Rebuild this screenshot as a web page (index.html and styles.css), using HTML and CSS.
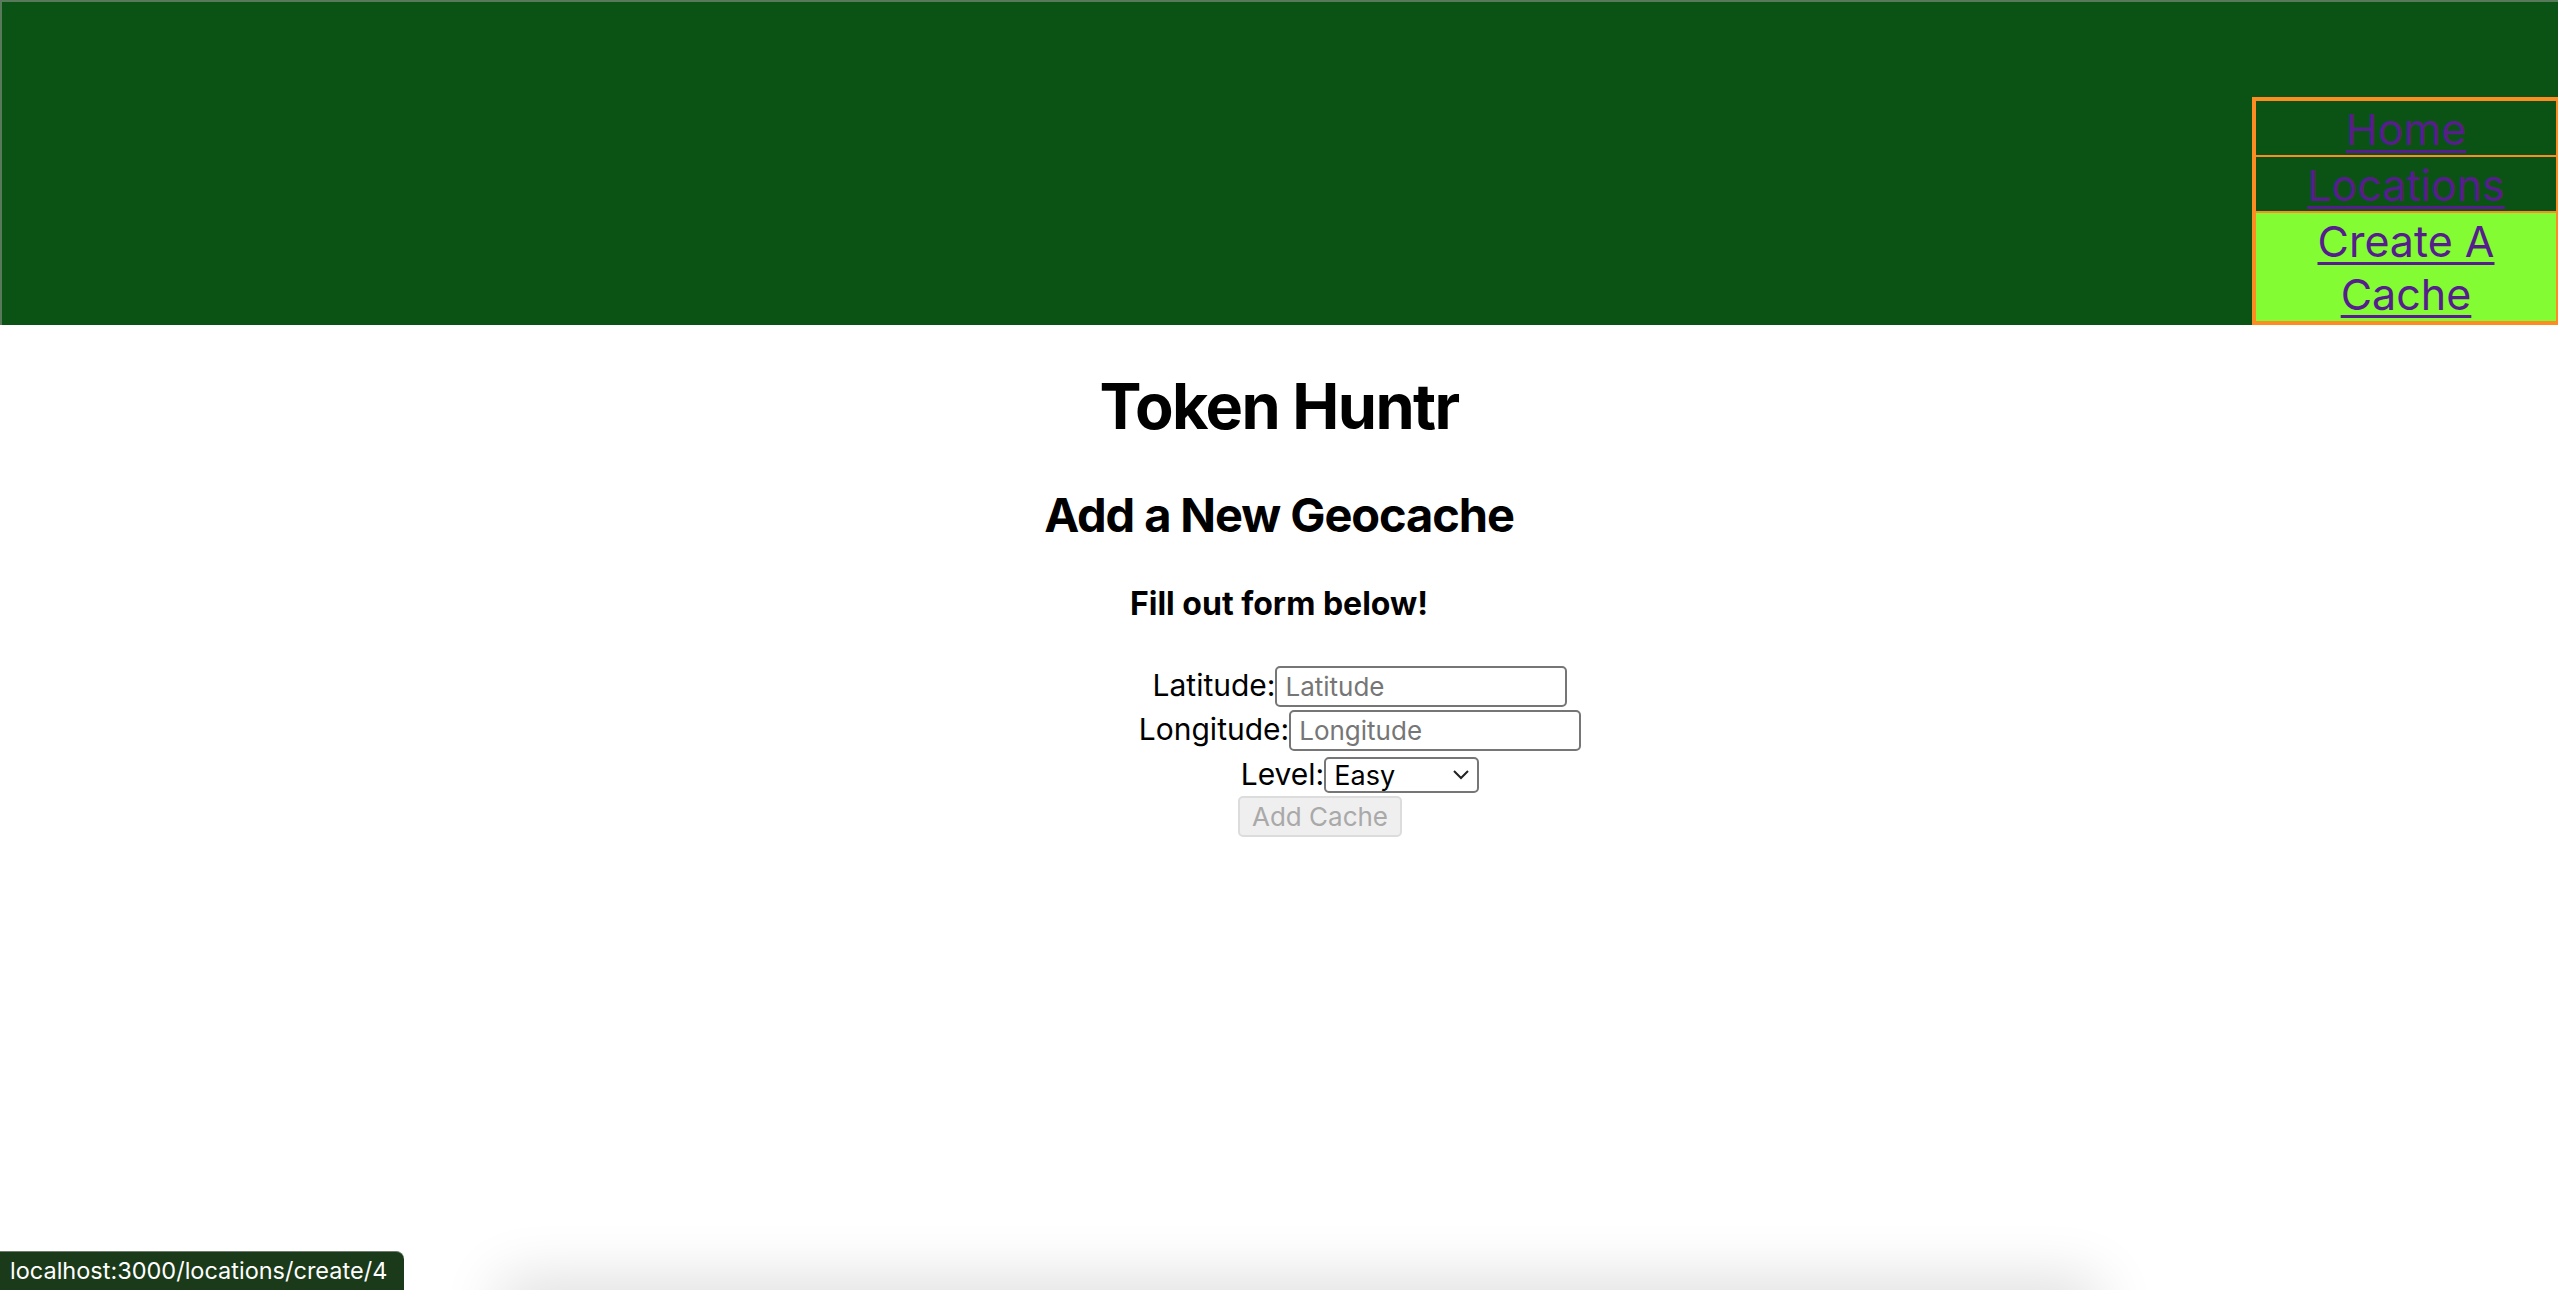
FILE: index.html
```html
<!DOCTYPE html>
<html lang="en">
<head>
  <meta charset="UTF-8">
  <title>Token Huntr</title>
  <link rel="stylesheet" href="styles.css">
</head>
<body>
  <header class="top-bar">
    <nav class="nav-menu">
      <a href="/" class="nav-link">Home</a>
      <a href="/locations" class="nav-link">Locations</a>
      <a href="/locations/create/4" class="nav-link active">Create A Cache</a>
    </nav>
  </header>

  <main class="content">
    <h1>Token Huntr</h1>
    <h2>Add a New Geocache</h2>
    <h4>Fill out form below!</h4>

    <form class="cache-form">
      <div class="form-row">
        <label for="lat">Latitude:</label>
        <input type="text" id="lat" name="latitude" placeholder="Latitude">
      </div>
      <div class="form-row">
        <label for="lng">Longitude:</label>
        <input type="text" id="lng" name="longitude" placeholder="Longitude">
      </div>
      <div class="form-row level-row">
        <label for="level">Level:</label>
        <span class="select-wrap">
          <select id="level" name="level">
            <option>Easy</option>
            <option>Medium</option>
            <option>Hard</option>
          </select>
          <svg class="chevron" width="18" height="11" viewBox="0 0 18 11">
            <path d="M2 2 L9 9 L16 2" fill="none" stroke="#222" stroke-width="2"/>
          </svg>
        </span>
      </div>
      <button type="submit" disabled>Add Cache</button>
    </form>
  </main>

  <!-- browser status bubble + bottom shadow -->
  <div class="status-bar">localhost:3000/locations/create/4</div>
  <div class="bottom-shade"></div>
</body>
</html>
```

FILE: styles.css
```css
body {
  margin: 0;
  font-family: Inter, "Noto Sans", sans-serif;
  color: #000;
  background: #fff;
}

.top-bar {
  height: 325px;
  box-sizing: border-box;
  background: #0b5315;
  border-top: 2px solid #58795a;
  border-left: 2px solid #58795a;
  display: flex;
  justify-content: flex-end;
  align-items: flex-end;
}

.nav-menu {
  width: 306px;
  box-sizing: border-box;
  border: 4px solid #fd8c23;
  border-right-width: 2px;
  display: flex;
  flex-direction: column;
}

.nav-link {
  display: block;
  text-align: center;
  font-size: 43px;
  line-height: 51px;
  padding-top: 3px;
  color: #561d8c;
  text-decoration: underline;
  text-decoration-thickness: 3px;
  text-underline-offset: 5px;
}

.nav-link + .nav-link {
  border-top: 2px solid #fd8c23;
}

.nav-link.active {
  background: #84fc34;
  line-height: 53px;
  padding: 2px 40px 0;
}

.content {
  text-align: center;
}

h1 {
  font-size: 63px;
  font-weight: 700;
  letter-spacing: -1.6px;
  margin: 43px 0 41px;
  line-height: 77px;
}

h2 {
  font-size: 47px;
  font-weight: 700;
  letter-spacing: -1.1px;
  margin: 0;
  line-height: 58px;
}

h4 {
  font-size: 32px;
  font-weight: 700;
  margin: 40px 0 43px;
  line-height: 39px;
}

.cache-form {
  display: flex;
  flex-direction: column;
  align-items: center;
  gap: 3px;
}

.form-row {
  display: flex;
  align-items: baseline;
  margin-left: 162px;
  font-size: 30px;
}

.form-row input {
  width: 292px;
  height: 41px;
  box-sizing: border-box;
  border: 2px solid #767676;
  border-radius: 5px;
  padding: 0 8px;
  font-family: Inter, "Noto Sans", sans-serif;
  font-size: 26px;
  color: #000;
}

.form-row input::placeholder {
  color: #767676;
}

.level-row {
  margin-top: 2px;
}

.select-wrap {
  position: relative;
  display: inline-block;
}

select {
  appearance: none;
  width: 155px;
  height: 36px;
  box-sizing: border-box;
  border: 2px solid #767676;
  border-radius: 5px;
  padding: 0 8px;
  background: #fff;
  font-family: Inter, "Noto Sans", sans-serif;
  font-size: 27px;
  color: #000;
}

.chevron {
  position: absolute;
  right: 9px;
  top: 13px;
  pointer-events: none;
}

button {
  margin-left: 82px;
  width: 164px;
  height: 41px;
  box-sizing: border-box;
  border: 2px solid #dcdcdc;
  border-radius: 5px;
  background: #efefef;
  color: #a9a9a9;
  font-family: Inter, "Noto Sans", sans-serif;
  font-size: 26px;
}

.status-bar {
  position: fixed;
  left: 0;
  bottom: 0;
  width: 404px;
  height: 39px;
  box-sizing: border-box;
  padding: 4px 10px 0;
  background: #1b3a1a;
  color: #fff;
  font-size: 23.5px;
  border-top-right-radius: 8px;
  border-top: 1px solid #6d7a6c;
}

.bottom-shade {
  position: fixed;
  left: 510px;
  right: 470px;
  bottom: -40px;
  height: 40px;
  box-shadow: 0 0 60px 10px rgba(0, 0, 0, 0.14);
}
```
